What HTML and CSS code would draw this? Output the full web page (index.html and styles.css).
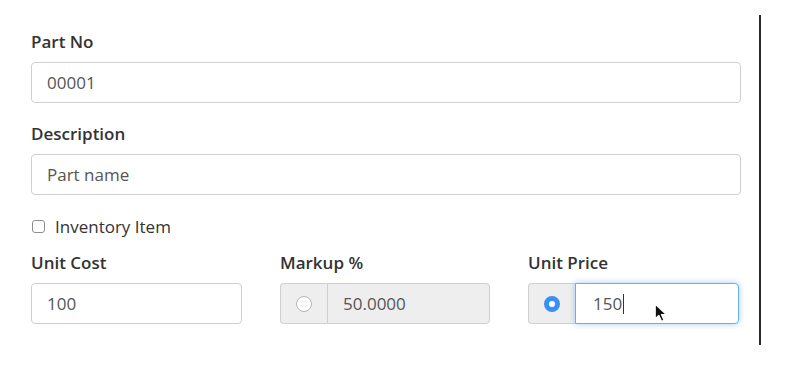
FILE: index.html
```html
<!DOCTYPE html>
<html>
<head>
<meta charset="utf-8">
<link rel="stylesheet" href="styles.css">
</head>
<body>
<div class="panel">
  <div class="group">
    <div class="label">Part No</div>
    <div class="control">00001</div>
  </div>
  <div class="group">
    <div class="label">Description</div>
    <div class="control">Part name</div>
  </div>
  <div class="check-row">
    <span class="checkbox"></span>
    <span class="check-label">Inventory Item</span>
  </div>
  <div class="row3">
    <div class="col">
      <div class="label">Unit Cost</div>
      <div class="control">100</div>
    </div>
    <div class="col">
      <div class="label">Markup %</div>
      <div class="input-group">
        <div class="addon"><span class="radio"></span></div>
        <div class="control joined disabled">50.0000</div>
      </div>
    </div>
    <div class="col">
      <div class="label">Unit Price</div>
      <div class="input-group">
        <div class="addon"><span class="radio checked"></span></div>
        <div class="control joined focused">150<span class="caret"></span>
          <svg class="cursor" width="15" height="21" viewBox="0 0 14 20"><path d="M1 1 L1 15 L4.5 11.8 L7 17.5 L9.4 16.4 L7 11 L11.6 11 Z" fill="#111" stroke="#fff" stroke-width="1.2" stroke-linejoin="round"/></svg>
        </div>
      </div>
    </div>
  </div>
</div>
</body>
</html>
```
FILE: styles.css
```css
html, body {
  margin: 0;
  padding: 0;
  background: #fff;
}
body {
  font-family: "Open Sans", "Noto Sans", sans-serif;
  font-size: 14px;
  color: #333;
}
.panel {
  box-sizing: border-box;
  margin-top: 15px;
  width: 761px;
  height: 330px;
  padding: 16px 18px 0 31px;
  border-right: 2px solid #2a2a2a;
}
.group {
  margin-bottom: 20px;
}
.label {
  font-size: 17px;
  font-weight: 600;
  line-height: 22px;
  margin-bottom: 9px;
  color: #333;
}
.control {
  position: relative;
  box-sizing: border-box;
  height: 41px;
  border: 1px solid #cfcfcf;
  border-radius: 4px;
  padding: 0 15px;
  display: flex;
  align-items: center;
  font-size: 17px;
  color: #555;
  background: #fff;
}
.check-row {
  display: flex;
  align-items: center;
  height: 22px;
  margin-top: 2px;
  margin-bottom: 15px;
}
.checkbox {
  box-sizing: border-box;
  width: 13px;
  height: 13px;
  border: 1px solid #8e8e8e;
  border-radius: 3px;
  margin: 0 10px 0 1px;
  background: #fff;
}
.check-label {
  font-size: 17px;
  color: #333;
}
.row3 {
  display: grid;
  grid-template-columns: 211px 210px 211px;
  column-gap: 38px;
  width: 710px;
}
.input-group {
  display: flex;
}
.addon {
  box-sizing: border-box;
  width: 47px;
  height: 41px;
  display: flex;
  align-items: center;
  justify-content: center;
  background: #eee;
  border: 1px solid #cfcfcf;
  border-right: none;
  border-radius: 4px 0 0 4px;
}
.radio {
  box-sizing: border-box;
  width: 16px;
  height: 16px;
  border-radius: 50%;
  border: 1px solid #b5b5b5;
  background: #fff;
}
.radio.checked {
  border: 5px solid #3a8ff5;
  background: #fff;
}
.control.joined {
  flex: 1;
  border-radius: 0 4px 4px 0;
}
.control.disabled {
  background: #eee;
}
.control.focused {
  border-color: #66afe9;
  box-shadow: 0 0 6px rgba(102, 175, 233, 0.6);
  padding-left: 17px;
}
.caret {
  display: inline-block;
  width: 1px;
  height: 20px;
  background: #333;
  margin-left: 1px;
}
.cursor {
  position: absolute;
  left: 78px;
  top: 19px;
}
```
